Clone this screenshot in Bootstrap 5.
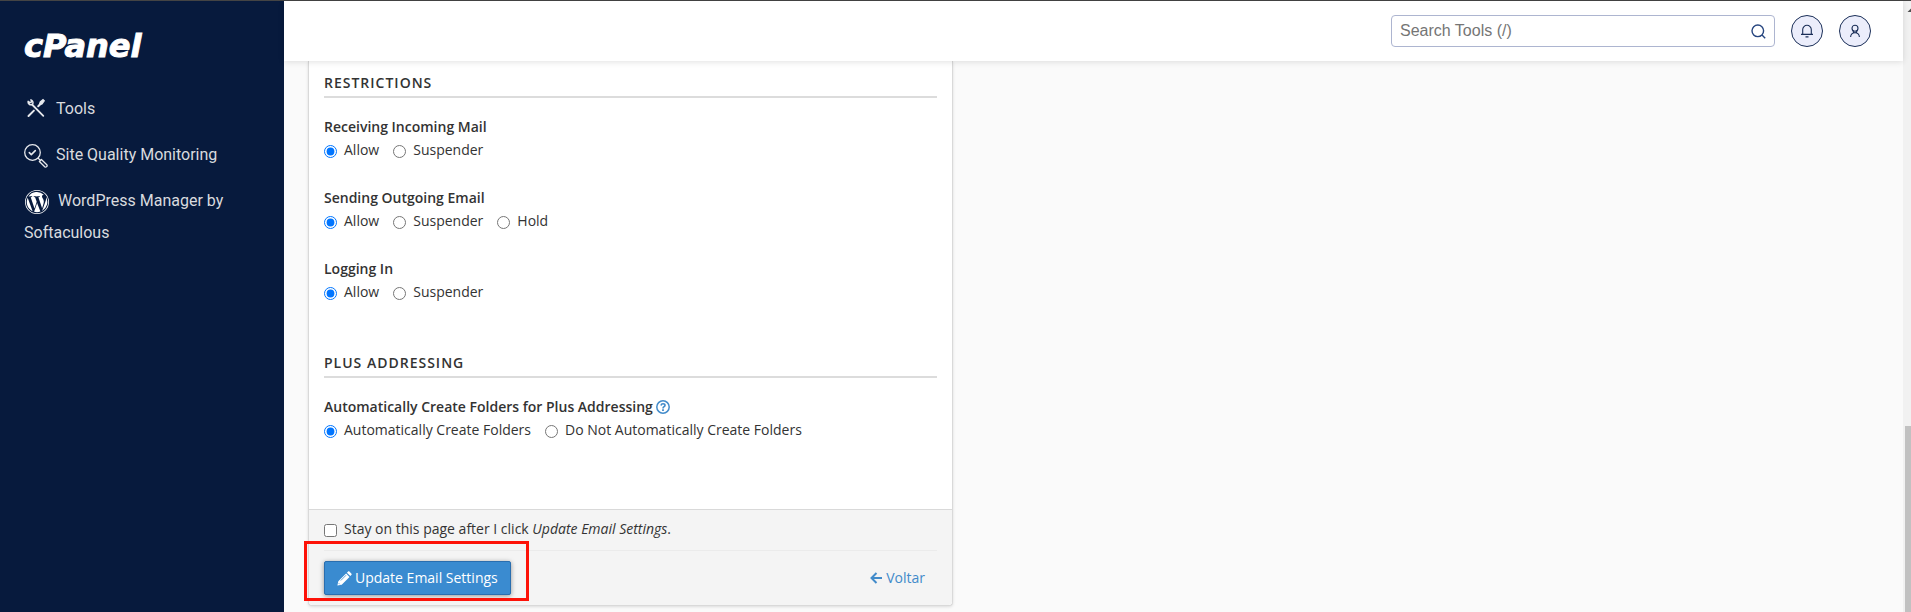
<!DOCTYPE html>
<html lang="en">
<head>
<meta charset="utf-8">
<meta name="viewport" content="width=device-width, initial-scale=1">
<title>cPanel - Manage an Email Account</title>
<link href="https://cdn.jsdelivr.net/npm/bootstrap@5.3.0/dist/css/bootstrap.min.css" rel="stylesheet">
<style>
  body { font-family: "Open Sans", sans-serif; font-size: 14px; line-height: 20px; color: #333; background: #fafafa; }
  .app-shell { border-top: 1px solid #444; }
  .side-nav { width: 284px; padding: 29px 24px; background: #071a3d; font-family: Roboto, sans-serif; font-size: 16px; line-height: 32px; }
  .brand-logo { font-family: "DejaVu Sans", sans-serif; font-weight: 700; font-style: italic; font-size: 32px; line-height: 32px; color: #fff; -webkit-text-stroke: 1px #fff; }
  .side-nav ul { margin-top: 31px; }
  .side-nav li { margin-bottom: 14px; }
  .side-nav li a { color: #d9dbdf; text-decoration: none; }
  .side-nav svg { vertical-align: middle; margin-right: 8px; }
  .top-bar { height: 60px; padding-right: 32px; background: #fff; box-shadow: 0 1px 6px rgba(0,0,0,.12); z-index: 1; }
  .search-box { width: 384px; height: 32px; border: 1px solid #adb5d0; border-radius: 4px; background: #fff; }
  .search-box input { font: 16px/24px "Liberation Sans", sans-serif; padding: 0 8px; border: 0; outline: 0; color: #333; background: transparent; }
  .search-box input::placeholder { color: #757575; opacity: 1; }
  .search-box button { border: 0; background: transparent; padding: 0 8px 0 0; line-height: 0; }
  .round-btn { width: 32px; height: 32px; border: 1px solid #1b2f58; border-radius: 50%; background: #ebedfb; padding: 0; }
  .mail-panel { width: 645px; max-width: calc(100% - 48px); margin-left: 24px; border: 1px solid #d9d9d9; border-top: 0; border-radius: 0 0 4px 4px; background: #fff; box-shadow: 0 1px 3px rgba(0,0,0,.12); }
  .panel-main { padding: 12px 15px 69px; }
  .section-title { font-size: 14px; line-height: 20px; font-weight: 600; letter-spacing: 1px; text-transform: uppercase; padding-bottom: 3px; border-bottom: 2px solid #dcdcdc; margin: 0 0 19px; }
  .section-title.next-section { margin-top: 51px; }
  .option-set { margin-bottom: 28px; }
  .option-set:last-child { margin-bottom: 0; }
  .option-set legend { float: none; font-size: 14px; line-height: 20px; font-weight: 600; margin-bottom: 3px; }
  .option-set .help-legend { gap: 3px; }
  .choice-row { gap: 14px; }
  .choice { gap: 7px; }
  .choice input { width: 13px; height: 13px; margin: 5px 0 0; accent-color: #0075ff; }
  .panel-foot { padding: 9px 15px 10px; background: #f4f4f4; border-top: 1px solid #d9d9d9; border-radius: 0 0 4px 4px; }
  .foot-actions { margin-top: 11px; padding-top: 10px; border-top: 1px solid #ebebeb; }
  .save-btn { height: 34px; padding: 0 12px; gap: 3px; font-size: 14px; line-height: 20px; color: #fff; background: #3a8bd0; border: 1px solid #2a6eaf; border-radius: 2px; box-shadow: 0 1px 5px rgba(0,0,0,.4); }
  .callout-frame { position: absolute; inset: -20px -18px -6px -20px; border: 3px solid #fd1208; pointer-events: none; }
  .plain-link { color: #428bca; text-decoration: none; }
  .scroll-rail { width: 8px; background: #f1f1f1; }
  .scroll-rail .rail-space { flex: 413 1 0; }
  .scroll-rail .rail-thumb { flex: 186 1 0; margin-left: 2px; background: #c1c1c1; }
</style>
</head>
<body>
<div class="app-shell d-flex min-vh-100">
  <nav class="side-nav flex-shrink-0" aria-label="Main">
    <div class="brand-logo">cPanel</div>
    <ul class="list-unstyled mb-0">
      <li><a href="#"><svg width="24" height="24" viewBox="0 2 24 24" fill="none" stroke="#e6e8ec" stroke-linecap="round"><path d="M8 8.500l11.300 11.300" stroke-width="1.800"/><path d="M4.100 5.400A2.900 2.900 0 0 0 8 8.600M7 3.900A3 3 0 0 1 8.800 7.800M4.100 5.400l1.800 1.200 1.300-.5.300-1.200L6.900 3.900" stroke-width="1.500"/><path d="M4.500 20l5.400-5.400M14.200 10.300l2.600-2.600" stroke-width="2"/><path d="M16.300 6.100l2.700-2.200 1 1-2.100 2.800-2.200.6z" fill="#e6e8ec" stroke-width="1.600"/></svg>Tools</a></li>
      <li><a href="#"><svg width="24" height="24" viewBox="0 0 24 24" fill="none" stroke="#e6e8ec" stroke-width="1.300" stroke-linecap="round" stroke-linejoin="round"><circle cx="8.500" cy="8.500" r="7.800"/><path d="M5.300 8.600l2 2 4-4" stroke-width="1.600"/><path d="M14.200 14.200l1.700 1.700M15.400 17.500l2-2 5.400 5.200a1.500 1.500 0 0 1-2.100 2.100z"/></svg>Site Quality Monitoring</a></li>
      <li><a href="#"><svg width="26" height="24" viewBox="-1 0 26 24" fill="#fff"><path d="M12 0a12 12 0 1 0 0 24 12 12 0 0 0 0-24m0 .8a11.200 11.200 0 1 1 0 22.400A11.200 11.200 0 0 1 12 .8"/><path d="M1.800 12c0 4 2.300 7.500 5.800 9.200L2.700 7.800A10.200 10.200 0 0 0 1.800 12m17-.5c0-1.300-.5-2.100-.8-2.800-.5-.8-1-1.500-1-2.300 0-.9.700-1.700 1.600-1.700h.2A10.200 10.200 0 0 0 3.500 6.400h.6c1.100 0 2.700-.1 2.700-.1.600 0 .6.800.1.800l-1.200.1 3.800 11.200 2.200-6.700L10.100 7.200 9 7.100c-.5 0-.5-.8.100-.8 0 0 1.700.1 2.700.1s2.700-.1 2.700-.1c.6 0 .6.800.1.800l-1.200.1 3.700 11.100 1-3.400c.5-1.400.7-2.400.7-3.400m-6.700 1.400-3 8.900a10.200 10.200 0 0 0 6.300-.2zm8.900-5.800c0 .4.100.7.100 1.100 0 1.100-.2 2.300-.8 3.800l-3.200 9A10.200 10.200 0 0 0 21 7.100"/></svg>WordPress Manager by Softaculous</a></li>
    </ul>
  </nav>

  <div class="flex-grow-1 d-flex flex-column">
    <header class="top-bar d-flex align-items-center justify-content-end gap-3">
      <form class="search-box d-flex align-items-center" role="search">
        <input class="flex-grow-1" type="text" placeholder="Search Tools (/)" aria-label="Search Tools">
        <button type="button" aria-label="Search"><svg width="15" height="15" viewBox="0 0 15 15" fill="none" stroke="#26457f" stroke-width="1.400"><circle cx="6.800" cy="6.800" r="5.800"/><path d="M11 11l3.200 3.200"/></svg></button>
      </form>
      <button class="round-btn d-flex align-items-center justify-content-center" type="button" aria-label="Notifications"><svg width="14" height="14" viewBox="0 0 14 14" fill="none" stroke="#1b2f58" stroke-width="1.100"><path d="M2.700 10.300V5.600a4.300 4.300 0 0 1 8.600 0v4.700M1 10.400h12M5.500 12.900h3"/></svg></button>
      <button class="round-btn d-flex align-items-center justify-content-center" type="button" aria-label="Account"><svg width="14" height="14" viewBox="0 0 14 14" fill="none" stroke="#1b2f58" stroke-width="1.100"><circle cx="7" cy="4.300" r="3"/><path d="M2.600 13c.2-2.800 2-4.200 4.400-4.200s4.200 1.400 4.400 4.200M4.800 6.600l1.200 2.200M9.200 6.600L8 8.800"/></svg></button>
    </header>

    <main>
      <form class="mail-panel">
        <div class="panel-main">
          <h2 class="section-title">Restrictions</h2>
          <fieldset class="option-set">
            <legend>Receiving Incoming Mail</legend>
            <div class="choice-row d-flex flex-wrap">
              <label class="choice d-flex"><input type="radio" name="incoming" checked>Allow</label>
              <label class="choice d-flex"><input type="radio" name="incoming">Suspender</label>
            </div>
          </fieldset>
          <fieldset class="option-set">
            <legend>Sending Outgoing Email</legend>
            <div class="choice-row d-flex flex-wrap">
              <label class="choice d-flex"><input type="radio" name="outgoing" checked>Allow</label>
              <label class="choice d-flex"><input type="radio" name="outgoing">Suspender</label>
              <label class="choice d-flex"><input type="radio" name="outgoing">Hold</label>
            </div>
          </fieldset>
          <fieldset class="option-set mb-0">
            <legend>Logging In</legend>
            <div class="choice-row d-flex flex-wrap">
              <label class="choice d-flex"><input type="radio" name="login" checked>Allow</label>
              <label class="choice d-flex"><input type="radio" name="login">Suspender</label>
            </div>
          </fieldset>
          <h2 class="section-title next-section">Plus Addressing</h2>
          <fieldset class="option-set">
            <legend class="help-legend d-flex align-items-center">Automatically Create Folders for Plus Addressing
              <a href="#" class="plain-link d-flex" aria-label="Help"><svg width="14" height="14" viewBox="0 0 14 14" fill="none" stroke="currentColor"><circle cx="7" cy="7" r="6.200" stroke-width="1.500"/><path d="M5 5.500c.2-1.200 1-1.700 2-1.700 1.200 0 2 .7 2 1.600C9 6.700 7 6.700 7 8.400" stroke-width="1.600"/><path d="M7 9.300v1.700" stroke-width="1.800"/></svg></a></legend>
            <div class="choice-row d-flex flex-wrap">
              <label class="choice d-flex"><input type="radio" name="plus" checked>Automatically Create Folders</label>
              <label class="choice d-flex"><input type="radio" name="plus">Do Not Automatically Create Folders</label>
            </div>
          </fieldset>
        </div>
        <div class="panel-foot">
          <label class="choice d-flex"><input type="checkbox"><span>Stay on this page after I click <em>Update Email Settings</em>.</span></label>
          <div class="foot-actions d-flex align-items-center justify-content-between">
            <div class="position-relative">
              <button class="save-btn d-flex align-items-center" type="button"><svg width="15" height="15" viewBox="0 0 15 15" fill="#fff"><path d="M.4 14.600l.9-4.300L9.100 2.500l3.400 3.400-7.800 7.800zM9.900 1.700l1-1c.5-.5 1.200-.5 1.700 0l1.700 1.700c.5.500.5 1.200 0 1.700l-1 1z"/><path d="M3.800 9.500l5.300-5.300M1.700 12.200l1.100 1.100" stroke="#3a8bd0" stroke-width=".8"/></svg>Update Email Settings</button>
              <span class="callout-frame"></span>
            </div>
            <a href="#" class="plain-link d-flex align-items-center gap-1 me-2 pe-1"><svg width="12" height="12" viewBox="0 0 12 12" fill="none" stroke="currentColor" stroke-width="2"><path d="M12 6H1.800M6.500 1L1.500 6l5 5"/></svg>Voltar</a>
          </div>
        </div>
      </form>
    </main>
  </div>

  <div class="scroll-rail d-flex flex-column flex-shrink-0" aria-hidden="true">
    <svg class="flex-shrink-0" width="8" height="12" viewBox="0 0 8 12"><path d="M4.500 11L8 7.500V11z" fill="#505050"/></svg>
    <div class="rail-space"></div>
    <div class="rail-thumb"></div>
  </div>
</div>
<script src="https://cdn.jsdelivr.net/npm/bootstrap@5.3.0/dist/js/bootstrap.bundle.min.js"></script>
</body>
</html>
